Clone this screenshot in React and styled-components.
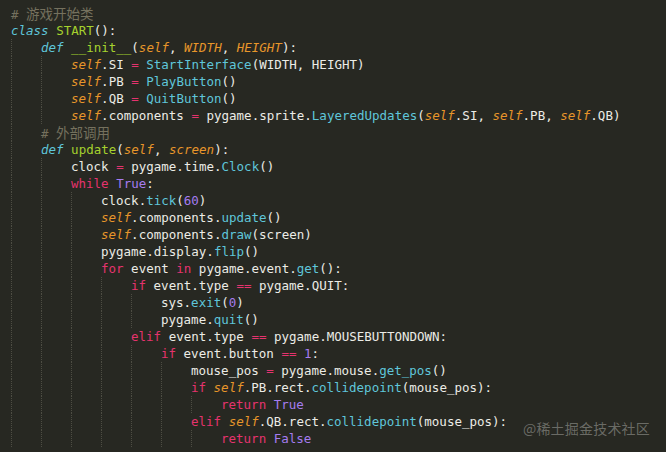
import React from "react";
import styled, { createGlobalStyle } from "styled-components";

const Global = createGlobalStyle`
  html, body {
    margin: 0;
    padding: 0;
    background: #272822;
  }
`;

const colors = {
  cm: "#75715e",
  kw: "#e5336e",
  op: "#e5336e",
  st: "#5fc6da",
  en: "#a6d22e",
  pa: "#e8962a",
  sf: "#e8962a",
  fn: "#5fc6da",
  cn: "#a57cf0",
};

const italic = { st: true, pa: true, sf: true };

const Editor = styled.div`
  position: relative;
  width: 666px;
  height: 452px;
  overflow: hidden;
  box-sizing: border-box;
  padding: 5px 0 0 11px;
  background: #272822;
  color: #ecece6;
  font-family: "DejaVu Sans Mono", "Noto Sans CJK SC", monospace;
  font-size: 12.5px;
`;

const Line = styled.div`
  display: flex;
  height: 17px;
  line-height: 17px;
  white-space: pre;
`;

const Guide = styled.span`
  flex-shrink: 0;
  width: 30px;
  height: 17px;
  box-sizing: border-box;
  border-left: 1px dotted #4d4d43;
`;

const Tok = styled.span`
  color: ${(p) => colors[p.$t] || "inherit"};
  font-style: ${(p) => (italic[p.$t] ? "italic" : "normal")};
`;

const Cjk = styled.span`
  font-family: "Noto Sans CJK SC", sans-serif;
  font-size: 13.5px;
`;

const Watermark = styled.div`
  position: absolute;
  right: 16px;
  bottom: 14px;
  color: rgba(220, 220, 215, 0.38);
  font-family: "Noto Sans CJK SC", sans-serif;
  font-size: 14px;
  letter-spacing: 0.2px;
`;

const L = (indent, ...parts) => ({ indent, parts });

const lines = [
  L(0, ["cm", "# ", "游戏开始类"]),
  L(0, ["st", "class"], " ", ["en", "START"], "():"),
  L(1, ["st", "def"], " ", ["en", "__init__"], "(", ["pa", "self"], ", ", ["pa", "WIDTH"], ", ", ["pa", "HEIGHT"], "):"),
  L(2, ["sf", "self"], ".SI ", ["op", "="], " ", ["fn", "StartInterface"], "(WIDTH, HEIGHT)"),
  L(2, ["sf", "self"], ".PB ", ["op", "="], " ", ["fn", "PlayButton"], "()"),
  L(2, ["sf", "self"], ".QB ", ["op", "="], " ", ["fn", "QuitButton"], "()"),
  L(2, ["sf", "self"], ".components ", ["op", "="], " pygame.sprite.", ["fn", "LayeredUpdates"], "(", ["sf", "self"], ".SI, ", ["sf", "self"], ".PB, ", ["sf", "self"], ".QB)"),
  L(1, ["cm", "# ", "外部调用"]),
  L(1, ["st", "def"], " ", ["en", "update"], "(", ["pa", "self"], ", ", ["pa", "screen"], "):"),
  L(2, "clock ", ["op", "="], " pygame.time.", ["fn", "Clock"], "()"),
  L(2, ["kw", "while"], " ", ["cn", "True"], ":"),
  L(3, "clock.", ["fn", "tick"], "(", ["cn", "60"], ")"),
  L(3, ["sf", "self"], ".components.", ["fn", "update"], "()"),
  L(3, ["sf", "self"], ".components.", ["fn", "draw"], "(screen)"),
  L(3, "pygame.display.", ["fn", "flip"], "()"),
  L(3, ["kw", "for"], " event ", ["kw", "in"], " pygame.event.", ["fn", "get"], "():"),
  L(4, ["kw", "if"], " event.type ", ["op", "=="], " pygame.QUIT:"),
  L(5, "sys.", ["fn", "exit"], "(", ["cn", "0"], ")"),
  L(5, "pygame.", ["fn", "quit"], "()"),
  L(4, ["kw", "elif"], " event.type ", ["op", "=="], " pygame.MOUSEBUTTONDOWN:"),
  L(5, ["kw", "if"], " event.button ", ["op", "=="], " ", ["cn", "1"], ":"),
  L(6, "mouse_pos ", ["op", "="], " pygame.mouse.", ["fn", "get_pos"], "()"),
  L(6, ["kw", "if"], " ", ["sf", "self"], ".PB.rect.", ["fn", "collidepoint"], "(mouse_pos):"),
  L(7, ["kw", "return"], " ", ["cn", "True"]),
  L(6, ["kw", "elif"], " ", ["sf", "self"], ".QB.rect.", ["fn", "collidepoint"], "(mouse_pos):"),
  L(7, ["kw", "return"], " ", ["cn", "False"]),
];

const CodeLine = ({ indent, parts }) => (
  <Line>
    {Array.from({ length: indent }, (_, i) => (
      <Guide key={"g" + i} />
    ))}
    {parts.map((p, i) => {
      if (typeof p === "string") return <Tok key={i}>{p}</Tok>;
      if (p[0] === "cm")
        return (
          <Tok key={i} $t="cm">
            {p[1]}
            <Cjk>{p[2]}</Cjk>
          </Tok>
        );
      return (
        <Tok key={i} $t={p[0]}>
          {p[1]}
        </Tok>
      );
    })}
  </Line>
);

export default function App() {
  return (
    <>
      <Global />
      <Editor>
        {lines.map((l, i) => (
          <CodeLine key={i} {...l} />
        ))}
        <Watermark>@稀土掘金技术社区</Watermark>
      </Editor>
    </>
  );
}
